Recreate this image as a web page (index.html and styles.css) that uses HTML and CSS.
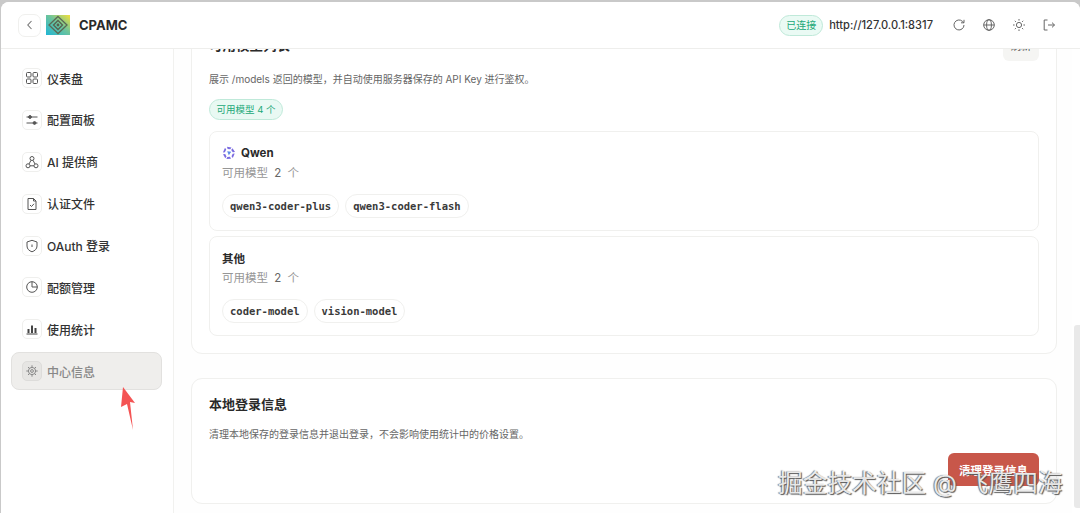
FILE: index.html
```html
<!DOCTYPE html>
<html lang="zh-CN">
<head>
    <meta charset="UTF-8">
    <title>CPAMC</title>
    <link rel="stylesheet" href="styles.css">
</head>
<body>
    <div class="window">
        <header class="topbar">
            <div class="brand">
                <button class="back-btn">
                    <svg width="12" height="12" viewBox="0 0 12 12"><path d="M7.5 2 L3.8 6 L7.5 10" fill="none" stroke="#777" stroke-width="1.1"/></svg>
                </button>
                <svg class="logo" width="24" height="20" viewBox="0 0 24 20">
                    <defs>
                        <linearGradient id="logoBg" x1="0" y1="1" x2="1" y2="0">
                            <stop offset="0" stop-color="#1fb6d6"/>
                            <stop offset="0.55" stop-color="#6fc49a"/>
                            <stop offset="1" stop-color="#f3e03c"/>
                        </linearGradient>
                    </defs>
                    <rect width="24" height="20" fill="url(#logoBg)"/>
                    <path d="M12 1.5 L21 10 L12 18.5 L3 10 Z" fill="none" stroke="#5b6a55" stroke-width="1.3"/>
                    <path d="M12 5.5 L16.5 10 L12 14.5 L7.5 10 Z" fill="none" stroke="#55614f" stroke-width="1.3"/>
                    <circle cx="12" cy="10" r="1.4" fill="#55614f"/>
                </svg>
                <span class="brand-name">CPAMC</span>
            </div>
            <div class="top-right">
                <span class="status-pill">已连接</span>
                <span class="server-url">http://127.0.0.1:8317</span>
                <div class="top-icons">
                    <svg width="14" height="14" viewBox="0 0 14 14" fill="none" stroke="#666" stroke-width="1"><path d="M12 7a5 5 0 1 1-1.6-3.7L12 4.8M12 1.8v3h-3"/></svg>
                    <svg width="14" height="14" viewBox="0 0 14 14" fill="none" stroke="#666" stroke-width="1"><circle cx="7" cy="7" r="5.3"/><ellipse cx="7" cy="7" rx="2.4" ry="5.3"/><path d="M1.7 7h10.6"/></svg>
                    <svg width="14" height="14" viewBox="0 0 14 14" fill="none" stroke="#666" stroke-width="1"><circle cx="7" cy="7" r="2.6"/><path d="M7 1v1.6M7 11.4V13M1 7h1.6M11.4 7H13M2.8 2.8l1.1 1.1M10.1 10.1l1.1 1.1M2.8 11.2l1.1-1.1M10.1 3.9l1.1-1.1"/></svg>
                    <svg width="14" height="14" viewBox="0 0 14 14" fill="none" stroke="#666" stroke-width="1"><path d="M5.5 2H2.2v10h3.3M6 7h6.5M10 4.6 12.5 7 10 9.4"/></svg>
                </div>
            </div>
        </header>

        <div class="body">
            <nav class="sidebar">
                <a class="nav-item">
                    <span class="nav-icon"><svg width="14" height="14" viewBox="0 0 14 14" fill="none" stroke="#555" stroke-width="1"><rect x="1.5" y="1.5" width="4.5" height="4.5" rx="1"/><rect x="8" y="1.5" width="4.5" height="4.5" rx="1"/><rect x="1.5" y="8" width="4.5" height="4.5" rx="1"/><rect x="8" y="8" width="4.5" height="4.5" rx="1"/></svg></span>
                    仪表盘
                </a>
                <a class="nav-item">
                    <span class="nav-icon"><svg width="14" height="14" viewBox="0 0 14 14" fill="none" stroke="#555" stroke-width="1"><path d="M1.5 4h11M1.5 10h11"/><circle cx="5" cy="4" r="1.4" fill="#555"/><circle cx="9.5" cy="10" r="1.4" fill="#555"/></svg></span>
                    配置面板
                </a>
                <a class="nav-item">
                    <span class="nav-icon"><svg width="14" height="14" viewBox="0 0 14 14" fill="none" stroke="#555" stroke-width="1"><circle cx="7" cy="3.5" r="2"/><circle cx="3" cy="10.8" r="2"/><circle cx="11" cy="10.8" r="2"/><path d="M6 5.3 4 9M8 5.3 10 9M5 10.8h4"/></svg></span>
                    AI 提供商
                </a>
                <a class="nav-item">
                    <span class="nav-icon"><svg width="14" height="14" viewBox="0 0 14 14" fill="none" stroke="#555" stroke-width="1"><path d="M8.5 1.5H3v11h8V4z"/><path d="M8.5 1.5V4H11M5 8l1.5 1.5L9 6.8"/></svg></span>
                    认证文件
                </a>
                <a class="nav-item">
                    <span class="nav-icon"><svg width="14" height="14" viewBox="0 0 14 14" fill="none" stroke="#555" stroke-width="1"><path d="M7 1.3 12 3v4c0 3-2.2 4.8-5 5.8C4.2 11.8 2 10 2 7V3z"/><path d="M7 5.5v2.5"/></svg></span>
                    OAuth 登录
                </a>
                <a class="nav-item">
                    <span class="nav-icon"><svg width="14" height="14" viewBox="0 0 14 14" fill="none" stroke="#555" stroke-width="1"><circle cx="7" cy="7" r="5.3"/><path d="M7 1.7V7h5.3"/></svg></span>
                    配额管理
                </a>
                <a class="nav-item">
                    <span class="nav-icon"><svg width="14" height="14" viewBox="0 0 14 14" fill="#444"><rect x="2.5" y="7" width="2" height="4"/><rect x="6" y="3.5" width="2" height="7.5"/><rect x="9.5" y="6" width="2" height="5"/><rect x="1.5" y="11.5" width="11" height="1"/></svg></span>
                    使用统计
                </a>
                <a class="nav-item active">
                    <span class="nav-icon"><svg width="14" height="14" viewBox="0 0 14 14" fill="none" stroke="#888" stroke-width="1"><circle cx="7" cy="7" r="3.6"/><circle cx="7" cy="7" r="1.4"/><path d="M7 1.3v2M7 10.7v2M1.3 7h2M10.7 7h2M3 3l1.4 1.4M9.6 9.6 11 11M3 11l1.4-1.4M9.6 4.4 11 3"/></svg></span>
                    中心信息
                </a>
                <svg class="arrow" width="15" height="45" viewBox="0 0 15 45"><path d="M2 1 14 17 9 16 12 44 6 18 0 21Z" fill="#f45454"/></svg>
            </nav>

            <main class="content">
                <section class="card models-card">
                    <div class="card-head">
                        <h2 class="card-title">可用模型列表</h2>
                        <button class="refresh-btn">刷新</button>
                    </div>
                    <p class="card-desc">展示 /models 返回的模型，并自动使用服务器保存的 API Key 进行鉴权。</p>
                    <span class="count-pill">可用模型 4 个</span>

                    <div class="group">
                        <div class="group-name">
                            <svg width="14" height="14" viewBox="0 0 14 14"><path d="M5 .8 9.5 1.5 8.3 3.3 5.6 3ZM10.5 2.2 13 6 10.800 6.300 9.200 4ZM12.700 7.500 10.800 12 9.500 10.200 10.700 7.700ZM9 12.800 4.400 13 5.300 11 8 10.800ZM3.300 12.300 1 8.200 3.200 7.900 4.500 10.400ZM.9 6.500 3 1.800 4.200 3.600 2.900 6.300Z" fill="#7a6be0"/><path d="M5.200 5.200 9.300 5.800 6.800 9.200Z" fill="#5a8ae6"/></svg>
                            Qwen
                        </div>
                        <div class="group-count">可用模型 <b>2</b> 个</div>
                        <div class="chips">
                            <span class="chip">qwen3-coder-plus</span>
                            <span class="chip">qwen3-coder-flash</span>
                        </div>
                    </div>

                    <div class="group">
                        <div class="group-name">其他</div>
                        <div class="group-count">可用模型 <b>2</b> 个</div>
                        <div class="chips">
                            <span class="chip">coder-model</span>
                            <span class="chip">vision-model</span>
                        </div>
                    </div>
                </section>

                <section class="card login-card">
                    <h2 class="card-title">本地登录信息</h2>
                    <p class="card-desc">清理本地保存的登录信息并退出登录，不会影响使用统计中的价格设置。</p>
                    <div class="card-actions">
                        <button class="danger-btn">清理登录信息</button>
                    </div>
                </section>
            </main>

            <div class="scrollbar"><div class="scroll-thumb"></div></div>
        </div>

        <div class="watermark">掘金技术社区 @ 飞鹰四海</div>
    </div>
</body>
</html>
```

FILE: styles.css
```css
* {
    box-sizing: border-box;
}
html, body {
    margin: 0;
    height: 100%;
    overflow: hidden;
}
body {
    font-family: Inter, "Noto Sans CJK SC", sans-serif;
    background-color: #c9c9c9;
    padding: 2px 0 0 1px;
}
.window {
    position: relative;
    display: flex;
    flex-direction: column;
    height: 511px;
    background: #fefefe;
    border-top-left-radius: 8px;
    border-top-right-radius: 8px;
    overflow: hidden;
}
.topbar {
    display: flex;
    justify-content: space-between;
    align-items: center;
    flex: none;
    height: 47px;
    padding: 0 24px 0 17px;
    background: white;
    border-bottom: 1px solid #eeeeec;
}
.brand {
    display: flex;
    align-items: center;
}
.back-btn {
    display: flex;
    align-items: center;
    justify-content: center;
    width: 23px;
    height: 23px;
    padding: 0;
    border: 1px solid #f0f0ee;
    border-radius: 7px;
    background: white;
}
.logo {
    margin-left: 5px;
}
.brand-name {
    margin-left: 9px;
    font-size: 13px;
    font-weight: 700;
    color: #2a2a2a;
}
.top-right {
    display: flex;
    align-items: center;
}
.status-pill {
    padding: 0 6px;
    height: 21px;
    line-height: 19px;
    font-size: 10px;
    color: #22a878;
    background: #eafaf4;
    border: 1px solid #bfe9d9;
    border-radius: 11px;
}
.server-url {
    margin-left: 6px;
    font-size: 11.1px;
    font-weight: 500;
    color: #333;
}
.top-icons {
    display: flex;
    gap: 16px;
    margin-left: 19px;
}
.body {
    display: flex;
    flex: 1;
    min-height: 0;
}
.sidebar {
    position: relative;
    flex: none;
    width: 173px;
    padding: 10px 11px 0 10px;
    background: white;
    border-right: 1px solid #f1f1ef;
}
.nav-item {
    display: flex;
    align-items: center;
    gap: 5px;
    height: 38px;
    margin-bottom: 3.9px;
    padding-left: 10px;
    font-size: 12px;
    font-weight: 500;
    color: #333;
    border: 1px solid transparent;
    border-radius: 8px;
}
.nav-icon {
    display: flex;
    align-items: center;
    justify-content: center;
    width: 20px;
    height: 20px;
    border: 1px solid #efefed;
    border-radius: 5px;
    background: white;
}
.nav-item.active {
    color: #888;
    background: #efeeec;
    border-color: #e2e1df;
}
.nav-item.active .nav-icon {
    background: #e6e5e3;
    border-color: #dddcda;
}
.arrow {
    position: absolute;
    left: 120px;
    top: 337px;
}
.content {
    flex: 1;
    min-width: 0;
    padding: 0 15px 0 17px;
    overflow: hidden;
}
.card {
    background: white;
    border: 1px solid #f0f0ee;
    border-radius: 11px;
    padding: 0 17px;
}
.models-card {
    height: 317px;
    margin-top: -12px;
    margin-bottom: 24px;
}
.card-head {
    display: flex;
    justify-content: space-between;
    height: 23px;
}
.card-head .card-title {
    font-size: 13.5px;
    line-height: 14px;
}
.card-title {
    margin: 0;
    font-size: 13px;
    font-weight: 700;
    color: #2a2a2a;
}
.refresh-btn {
    flex: none;
    width: 36px;
    height: 30px;
    margin-top: -7px;
    padding: 0 0 2px;
    border: none;
    border-radius: 6px;
    font-size: 10px;
    color: #444;
    background: #f5f5f3;
}
.card-desc {
    margin: 11px 0 0;
    font-size: 10px;
    line-height: 14px;
    color: #666;
}
.count-pill {
    display: inline-block;
    height: 21px;
    margin-top: 13px;
    padding: 0 6.5px;
    line-height: 19px;
    font-size: 9.5px;
    color: #22a878;
    background: #e9f9f3;
    border: 1px solid #bfe9d9;
    border-radius: 11px;
}
.group {
    height: 100px;
    margin-top: 5px;
    padding: 12px 12px 0;
    border: 1px solid #f0f0ee;
    border-radius: 8px;
}
.count-pill + .group {
    margin-top: 11px;
}
.group-name {
    display: flex;
    align-items: center;
    gap: 5px;
    height: 17px;
    font-size: 11.5px;
    font-weight: 700;
    color: #2a2a2a;
}
.group-count {
    margin-top: 4px;
    font-size: 11.5px;
    line-height: 16px;
    color: #969696;
    word-spacing: 3px;
}
.group-count b {
    font-weight: 400;
    color: #666;
}
.chips {
    display: flex;
    gap: 6px;
    margin-top: 13px;
}
.chip {
    height: 24px;
    padding: 0 7px;
    line-height: 22px;
    font-family: "DejaVu Sans Mono", monospace;
    font-size: 10.5px;
    font-weight: 700;
    color: #3a3a3a;
    background: white;
    border: 1px solid #f0f0ee;
    border-radius: 12px;
}
.login-card {
    height: 126px;
    padding-top: 15px;
}
.login-card .card-desc {
    margin-top: 14px;
}
.card-actions {
    display: flex;
    justify-content: flex-end;
    margin-top: 12px;
}
.danger-btn {
    width: 91px;
    height: 33px;
    padding: 1px 0 0;
    border: none;
    border-radius: 6px;
    font-family: inherit;
    font-size: 11.5px;
    font-weight: 700;
    color: white;
    background: #c8574a;
}
.scrollbar {
    flex: none;
    width: 8px;
    padding-left: 2px;
    background: white;
}
.scroll-thumb {
    height: 183px;
    margin-top: 276px;
    border-radius: 3px 0 0 3px;
    background: #e9e9e9;
}
.watermark {
    position: absolute;
    left: 777px;
    top: 465px;
    font-size: 24.7px;
    line-height: 32px;
    white-space: nowrap;
    color: rgba(255, 255, 255, 0.85);
    text-shadow: 1px 1px 1px #555, -1px 0 1px #777;
}
```
